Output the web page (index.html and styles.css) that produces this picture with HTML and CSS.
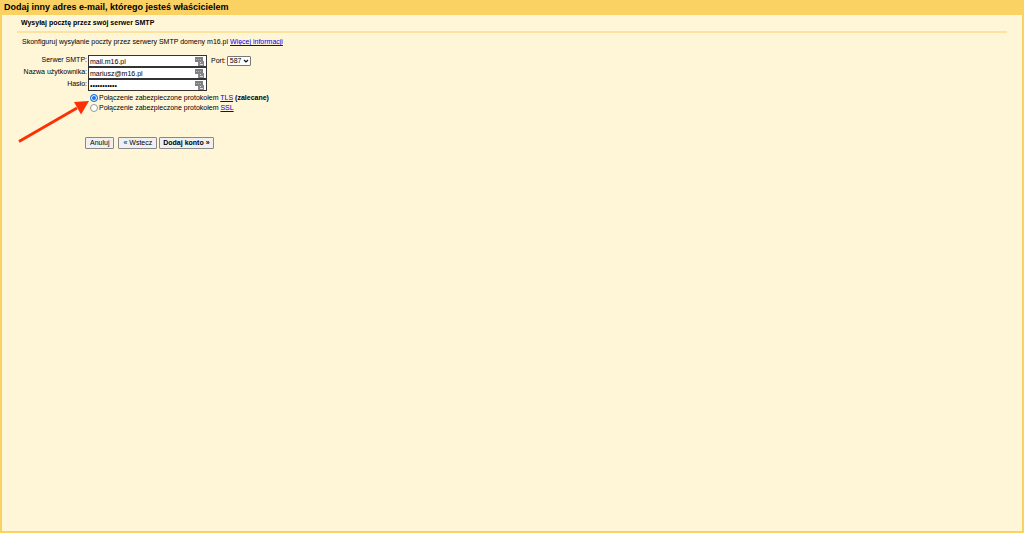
FILE: index.html
```html
<!DOCTYPE html>
<html lang="pl">
<head>
<meta charset="utf-8">
<title>Dodaj inny adres e-mail</title>
<link rel="stylesheet" href="styles.css">
</head>
<body>
<svg class="defs" aria-hidden="true">
  <symbol id="key-icon" viewBox="0 0 9 9">
    <path fill="#7f7f83" d="M0 0h8v5H0z"/>
    <path fill="#88888c" d="M3 4h6v5H3z"/>
    <path fill="#b4b4b8" d="M1 2h1v1H1zM3 2h1v1H3zM5 2h1v1H5z"/>
    <path fill="#dedee0" d="M5 5h1v1H5zM5 7h3v1H5z"/>
  </symbol>
</svg>
<header class="title-bar"><h1 class="title">Dodaj inny adres e-mail, którego jesteś właścicielem</h1></header>
<main class="content">
  <h2 class="subtitle">Wysyłaj pocztę przez swój serwer SMTP</h2>
  <p class="intro">Skonfiguruj wysyłanie poczty przez serwery SMTP domeny m16.pl <a href="#info">Więcej informacji</a></p>
  <form class="form">
    <div class="fields">
      <label class="label" for="server">Serwer SMTP:</label>
      <div class="cell">
        <span class="box"><input class="input" id="server" type="text" value="mail.m16.pl"><svg class="key"><use href="#key-icon"/></svg></span>
        <label class="port-label" for="port">Port:</label>
        <span class="port-box"><select class="port" id="port"><option>587</option><option>465</option><option>25</option></select><svg class="chevron" viewBox="0 0 6 4"><path d="M1 1l2 2 2-2" fill="none" stroke="#111" stroke-width="1.2"/></svg></span>
      </div>
      <label class="label" for="user">Nazwa użytkownika:</label>
      <div class="cell"><span class="box"><input class="input" id="user" type="text" value="mariusz@m16.pl"><svg class="key"><use href="#key-icon"/></svg></span></div>
      <label class="label" for="password">Hasło:</label>
      <div class="cell"><span class="box"><input class="input" id="password" type="password" value="abcdefghijk"><svg class="key"><use href="#key-icon"/></svg></span></div>
    </div>
    <div class="options">
      <div class="option"><input class="radio" type="radio" name="security" id="tls" checked><label for="tls">Połączenie zabezpieczone protokołem <a href="#tls-info">TLS</a> <b>(zalecane)</b></label></div>
      <div class="option"><input class="radio" type="radio" name="security" id="ssl"><label for="ssl">Połączenie zabezpieczone protokołem <a href="#ssl-info">SSL</a></label></div>
    </div>
    <div class="actions">
      <button class="button cancel" type="button">Anuluj</button>
      <button class="button" type="button">« Wstecz</button>
      <button class="button primary" type="submit">Dodaj konto »</button>
    </div>
    <svg class="arrow" viewBox="0 0 74 46" aria-hidden="true"><path d="M2 43.5L60 10" stroke="#fb3106" stroke-width="2.8"/><path d="M72 3L57 4L64 16.500Z" fill="#fb3106"/></svg>
  </form>
</main>
</body>
</html>
```
FILE: styles.css
```css
* { box-sizing: border-box; }

body {
  margin: 0;
  min-height: 100vh;
  display: flex;
  flex-direction: column;
  background: #fff5d7;
  border: 2px solid #fad163;
  border-top: 0;
  font: 7px/10px "Liberation Sans", Arial, sans-serif;
  color: #000;
}

.defs { position: absolute; width: 0; height: 0; }

.title-bar { background: #fad163; padding: 0 2px; }
.title { margin: 0; font-size: 9px; line-height: 15px; }

.content { padding: 3px 15px; }
.subtitle {
  margin: 0;
  padding: 0 4px 3px;
  font-size: 7px;
  line-height: 10px;
  border-bottom: 2px solid #fce3a0;
}
.intro { margin: 4px 0 8px; padding-left: 5px; }
a { color: #0000ee; }

.form { position: relative; }
.fields {
  display: grid;
  grid-template-columns: 70px 1fr;
  column-gap: 1px;
  grid-auto-rows: 12px;
}
.label { text-align: right; line-height: 10px; }
.cell { display: flex; align-items: center; }
.box { position: relative; display: flex; width: 119px; }
.input {
  width: 100%;
  height: 12px;
  padding: 0 12px 0 1px;
  border: 1px solid #333;
  background: #fff;
  color: #000;
  font: inherit;
}
.key { position: absolute; right: 3px; top: 2px; width: 9px; height: 9px; }
.port-label { margin: 0 1px 0 4px; }
.port-box { position: relative; display: flex; }
.port {
  appearance: none;
  width: 24px;
  height: 10px;
  padding: 0 2px;
  border: 1px solid #777;
  border-radius: 1px;
  background: #fff;
  color: #000;
  font: inherit;
  line-height: 8px;
}
.chevron { position: absolute; right: 2px; top: 3px; width: 6px; height: 4px; pointer-events: none; }

.options { padding: 2px 0 0 73px; }
.option { display: flex; align-items: center; gap: 1px; height: 10px; }
.radio {
  appearance: none;
  width: 8px;
  height: 8px;
  margin: 0;
  border: 1px solid #999;
  border-radius: 50%;
  background: #fff;
}
.radio:checked { border-color: #1a73e8; background: #1a73e8; box-shadow: inset 0 0 0 1px #fff; }

.actions { display: flex; gap: 2px; padding: 24px 0 0 68px; }
.button {
  height: 12px;
  padding: 0 4px;
  border: 1px solid #888;
  border-radius: 1px;
  background: #f0f0f0;
  color: #000;
  font: inherit;
}
.cancel { margin-right: 2px; }
.primary { padding: 0 3px; font-weight: bold; }

.arrow { position: absolute; left: 0; top: 43px; width: 74px; height: 46px; pointer-events: none; }
```
